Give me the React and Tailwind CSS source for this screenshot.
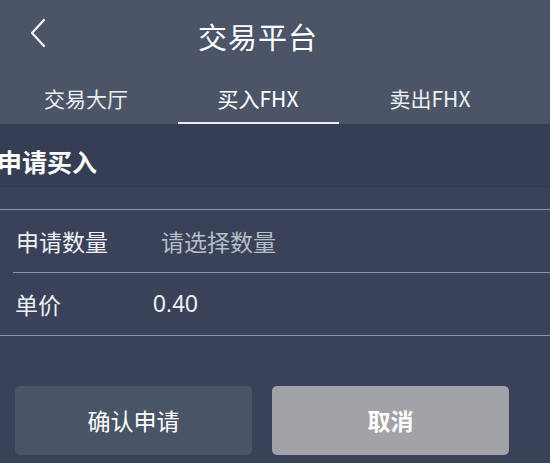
import React from 'react';

const tabs = ['交易大厅', '买入FHX', '卖出FHX'];

const App = () => {
  const active = 1;

  return (
    <div className="w-[550px] h-[463px] overflow-hidden bg-[#394259] text-[#eef0f3]" style={{ fontFamily: '"Noto Sans CJK SC", "Liberation Sans", sans-serif' }}>
      {/* Header */}
      <div className="bg-[#4b5567]">
        <div className="w-[516px] h-[72px] flex items-center justify-center relative">
          <button className="absolute left-[26px] top-[16px] w-[24px] h-[36px] flex items-center justify-center" aria-label="返回">
            <svg className="w-[20px] h-[34px]" viewBox="0 0 20 34" fill="none" stroke="#f2f4f7" strokeWidth="2.2" strokeLinecap="round" strokeLinejoin="round">
              <path d="M16 3 L4 16 L16 29" />
            </svg>
          </button>
          <h1 className="text-[29px] leading-none font-normal tracking-[1px] text-white">交易平台</h1>
        </div>
        <div className="w-[516px] h-[52px] grid grid-cols-3">
          {tabs.map((t, i) => (
            <div key={t} className="flex flex-col items-center">
              <span className={`flex-1 flex items-center text-[21px] leading-none pt-[2px] ${i === active ? 'text-white' : 'text-[#eceef2]'}`}>{t}</span>
              <div className={`h-[2px] w-[161px] ${i === active ? 'bg-[#e9ecf0]' : 'bg-transparent'}`} />
            </div>
          ))}
        </div>
      </div>

      {/* Section title */}
      <div className="h-[63px] bg-[#353e53] border-b border-[#2d3547] flex items-center">
        <h2 className="-ml-[3px] text-[25px] font-bold leading-none pt-[12px] text-white">申请买入</h2>
      </div>

      {/* Form */}
      <div className="mt-[22px] border-t border-[#8c94a3]">
        <div className="h-[62px] flex items-center pl-[16px]">
          <span className="w-[145px] text-[23px] leading-none">申请数量</span>
          <span className="text-[23px] leading-none text-[#b7bdc7]">请选择数量</span>
        </div>
        <div className="ml-[13px] border-t border-[#8c94a3]" />
        <div className="h-[62px] flex items-center pl-[15px]">
          <span className="w-[138px] text-[23px] leading-none">单价</span>
          <span className="text-[23px] leading-none" style={{ fontFamily: '"Liberation Sans", sans-serif' }}>0.40</span>
        </div>
        <div className="border-t border-[#8c94a3]" />
      </div>

      {/* Buttons */}
      <div className="mt-[50px] pl-[15px] flex gap-[20px]">
        <button className="w-[237px] h-[69px] rounded-[5px] bg-[#4a5467] text-[23px] text-white">确认申请</button>
        <button className="w-[237px] h-[69px] rounded-[5px] bg-[#a2a3a8] text-[23px] font-bold text-white">取消</button>
      </div>
    </div>
  );
};

export default App;
